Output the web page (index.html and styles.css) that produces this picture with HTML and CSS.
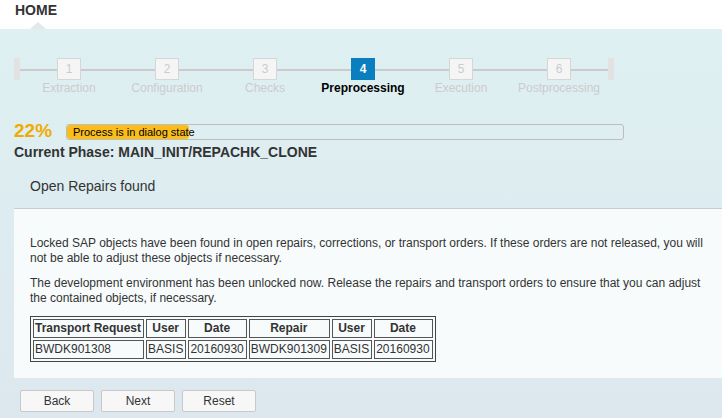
FILE: index.html
```html
<!DOCTYPE html>
<html lang="en">
<head>
    <meta charset="UTF-8">
    <title>Software Update Manager</title>
    <link rel="stylesheet" href="styles.css">
</head>
<body>
    <div class="header">
        <h1>HOME</h1>
        <span class="pointer"></span>
    </div>

    <div class="main">
        <div class="roadmap">
            <span class="cap"></span>
            <div class="step done"><span class="box">1</span><span class="label">Extraction</span></div>
            <div class="step done"><span class="box">2</span><span class="label">Configuration</span></div>
            <div class="step done"><span class="box">3</span><span class="label">Checks</span></div>
            <div class="step active"><span class="box">4</span><span class="label">Preprocessing</span></div>
            <div class="step"><span class="box">5</span><span class="label">Execution</span></div>
            <div class="step"><span class="box">6</span><span class="label">Postprocessing</span></div>
            <span class="cap"></span>
        </div>

        <div class="progress-row">
            <span class="percent">22%</span>
            <div class="progress">
                <div class="progress-fill" style="width: 22%"></div>
                <span class="progress-text">Process is in dialog state</span>
            </div>
        </div>
        <div class="phase">Current Phase: MAIN_INIT/REPACHK_CLONE</div>

        <h2 class="dialog-title">Open Repairs found</h2>

        <div class="dialog">
            <p>Locked SAP objects have been found in open repairs, corrections, or transport orders. If these orders are not released, you will not be able to adjust these objects if necessary.</p>
            <p>The development environment has been unlocked now. Release the repairs and transport orders to ensure that you can adjust the contained objects, if necessary.</p>
            <table class="repairs">
                <thead>
                    <tr>
                        <th>Transport Request</th>
                        <th>User</th>
                        <th>Date</th>
                        <th>Repair</th>
                        <th>User</th>
                        <th>Date</th>
                    </tr>
                </thead>
                <tbody>
                    <tr>
                        <td>BWDK901308</td>
                        <td>BASIS</td>
                        <td>20160930</td>
                        <td>BWDK901309</td>
                        <td>BASIS</td>
                        <td>20160930</td>
                    </tr>
                </tbody>
            </table>
        </div>

        <div class="buttons">
            <button>Back</button>
            <button>Next</button>
            <button>Reset</button>
        </div>
    </div>
</body>
</html>
```

FILE: styles.css
```css
body {
    margin: 0;
    font-family: "Liberation Sans", Arial, sans-serif;
    font-size: 12px;
    color: #333;
    background: #dce8ee;
}

.header {
    height: 29px;
    background: #fff;
    position: relative;
}

.header h1 {
    margin: 0;
    padding: 2px 0 0 15px;
    font-size: 14px;
    line-height: 16px;
    font-weight: bold;
    color: #333;
}

.pointer {
    position: absolute;
    left: 30px;
    bottom: 0;
    width: 0;
    height: 0;
    border-left: 8px solid transparent;
    border-right: 8px solid transparent;
    border-bottom: 7px solid #e3e8ea;
}

.main {
    background: linear-gradient(#def0f2, #dce8ee);
    height: 389px;
}

/* Roadmap */
.roadmap {
    display: flex;
    padding: 29px 0 0 14px;
    height: 62px;
}

.cap {
    width: 6px;
    height: 22px;
    background: #e2e2e2;
}

.step {
    width: 98px;
    display: flex;
    flex-direction: column;
    align-items: center;
    position: relative;
}

.step::before {
    content: "";
    position: absolute;
    left: 0;
    right: 0;
    top: 11px;
    border-top: 2px solid #cbcbcb;
}

.step .box {
    position: relative;
    width: 22px;
    height: 20px;
    line-height: 20px;
    text-align: center;
    background: #f5f5f5;
    border: 1px solid #d6d6d6;
    color: #cccccc;
    font-size: 12px;
}

.step .label {
    margin-top: 1px;
    color: #cccccc;
    font-size: 12px;
    line-height: 14px;
    white-space: nowrap;
}

.step.active .box {
    background: #0a7ebe;
    border-color: #0a7ebe;
    color: #fff;
    font-weight: bold;
}

.step.active .label {
    color: #000;
    font-weight: bold;
}

/* Progress */
.progress-row {
    display: flex;
    align-items: center;
    padding-left: 14px;
    height: 22px;
}

.percent {
    width: 52px;
    color: #f0ab00;
    font-size: 19px;
    font-weight: bold;
}

.progress {
    position: relative;
    width: 556px;
    height: 14px;
    border: 1px solid #bdbdbd;
    border-radius: 3px;
    margin-top: 2px;
}

.progress-fill {
    height: 100%;
    background: #fbbd1a;
    border-radius: 3px;
}

.progress-text {
    position: absolute;
    left: 6px;
    top: 0;
    line-height: 14px;
    font-size: 11px;
    color: #000;
}

.phase {
    padding: 2px 0 0 14px;
    font-size: 14px;
    font-weight: bold;
    line-height: 16px;
    color: #333;
}

.dialog-title {
    margin: 0;
    padding: 17px 0 0 30px;
    height: 31px;
    font-size: 14px;
    font-weight: normal;
    line-height: 18px;
    color: #333;
}

.dialog {
    margin-left: 14px;
    border-top: 1px solid #cccccc;
    background: #f7fbfc;
    padding: 27px 16px 16px 16px;
}

.dialog p {
    margin: 0 0 10px 0;
    line-height: 15px;
    font-size: 12px;
}

.repairs {
    border: 1px solid #444;
    border-spacing: 2px;
    margin-top: 10px;
    font-size: 12px;
}

.repairs th,
.repairs td {
    border: 1px solid #555;
    padding: 1px 2px 1px 1px;
    line-height: 15px;
    white-space: nowrap;
}

.repairs th {
    text-align: center;
    font-weight: bold;
}

.repairs td {
    text-align: left;
}

.buttons {
    display: flex;
    gap: 7px;
    padding: 12px 0 0 20px;
}

.buttons button {
    width: 74px;
    height: 22px;
    background: #f7f7f7;
    border: 1px solid #c8c8c8;
    border-radius: 2px;
    font-family: "Liberation Sans", Arial, sans-serif;
    font-size: 12px;
    color: #333;
}
```
